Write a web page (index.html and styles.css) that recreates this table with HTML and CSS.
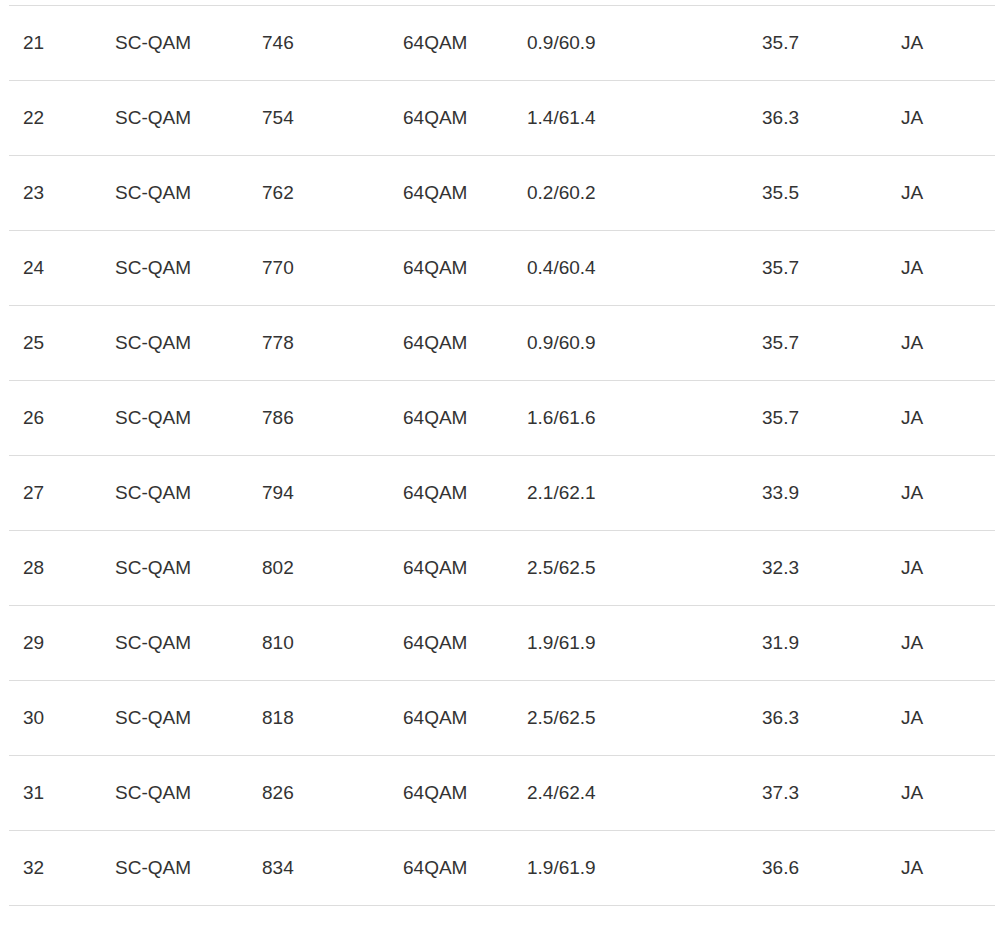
FILE: index.html
```html
<!DOCTYPE html>
<html>
<head>
<meta charset="utf-8">
<link rel="stylesheet" href="styles.css">
</head>
<body>
<div class="wrap">
<table class="channels">
<colgroup>
<col class="c1"><col class="c2"><col class="c3"><col class="c4"><col class="c5"><col class="c6"><col class="c7">
</colgroup>
<tbody>
<tr><td>21</td><td>SC-QAM</td><td>746</td><td>64QAM</td><td>0.9/60.9</td><td>35.7</td><td>JA</td></tr>
<tr><td>22</td><td>SC-QAM</td><td>754</td><td>64QAM</td><td>1.4/61.4</td><td>36.3</td><td>JA</td></tr>
<tr><td>23</td><td>SC-QAM</td><td>762</td><td>64QAM</td><td>0.2/60.2</td><td>35.5</td><td>JA</td></tr>
<tr><td>24</td><td>SC-QAM</td><td>770</td><td>64QAM</td><td>0.4/60.4</td><td>35.7</td><td>JA</td></tr>
<tr><td>25</td><td>SC-QAM</td><td>778</td><td>64QAM</td><td>0.9/60.9</td><td>35.7</td><td>JA</td></tr>
<tr><td>26</td><td>SC-QAM</td><td>786</td><td>64QAM</td><td>1.6/61.6</td><td>35.7</td><td>JA</td></tr>
<tr><td>27</td><td>SC-QAM</td><td>794</td><td>64QAM</td><td>2.1/62.1</td><td>33.9</td><td>JA</td></tr>
<tr><td>28</td><td>SC-QAM</td><td>802</td><td>64QAM</td><td>2.5/62.5</td><td>32.3</td><td>JA</td></tr>
<tr><td>29</td><td>SC-QAM</td><td>810</td><td>64QAM</td><td>1.9/61.9</td><td>31.9</td><td>JA</td></tr>
<tr><td>30</td><td>SC-QAM</td><td>818</td><td>64QAM</td><td>2.5/62.5</td><td>36.3</td><td>JA</td></tr>
<tr><td>31</td><td>SC-QAM</td><td>826</td><td>64QAM</td><td>2.4/62.4</td><td>37.3</td><td>JA</td></tr>
<tr><td>32</td><td>SC-QAM</td><td>834</td><td>64QAM</td><td>1.9/61.9</td><td>36.6</td><td>JA</td></tr>
</tbody>
</table>
</div>
</body>
</html>
```
FILE: styles.css
```css
html, body {
  margin: 0;
  padding: 0;
  background: #fff;
}
.wrap {
  padding: 5px 4px 0 9px;
}
.channels {
  width: 986px;
  border-collapse: collapse;
  table-layout: fixed;
  font-family: "Liberation Sans", Arial, sans-serif;
  font-size: 19px;
  color: #333;
  border-bottom: 1px solid #ddd;
}
.c1 { width: 92px; }
.c2 { width: 147px; }
.c3 { width: 141px; }
.c4 { width: 124px; }
.c5 { width: 235px; }
.c6 { width: 139px; }
.c7 { width: 108px; }
.channels td {
  border-top: 1px solid #ddd;
  padding: 23px 0 24px 14px;
  line-height: 27px;
  vertical-align: middle;
  white-space: nowrap;
}
```
